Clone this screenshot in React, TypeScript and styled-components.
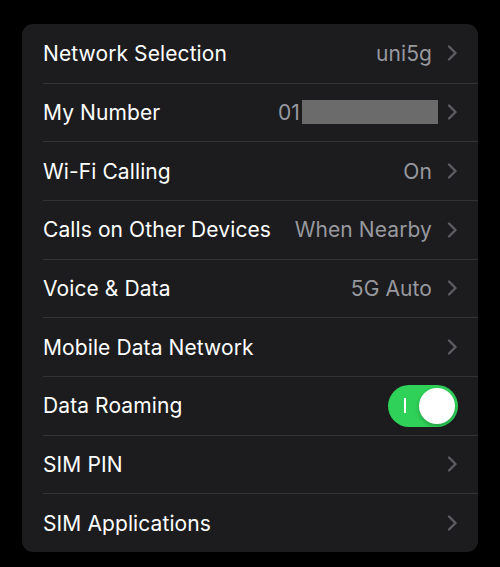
import React from "react";
import styled, { createGlobalStyle } from "styled-components";

const GlobalStyle = createGlobalStyle`
  html, body {
    margin: 0;
    padding: 0;
    background: #000;
  }
  body {
    font-family: Inter, "Liberation Sans", sans-serif;
    -webkit-font-smoothing: antialiased;
  }
`;

const Page = styled.div`
  width: 500px;
  height: 567px;
  padding: 24px 22px 15px;
  box-sizing: border-box;
  background: #000;
`;

const Panel = styled.div`
  display: grid;
  grid-template-rows: repeat(9, 1fr);
  height: 528px;
  border-radius: 11px;
  background: #1c1c1e;
  overflow: hidden;
`;

const Row = styled.div`
  padding-left: 21px;
  display: flex;
`;

const RowInner = styled.div<{ $first?: boolean }>`
  flex: 1;
  display: flex;
  align-items: center;
  padding-right: 21px;
  border-top: ${(p) => (p.$first ? "none" : "1px solid #333336")};
`;

const Label = styled.span`
  flex: 1;
  color: #fff;
  font-size: 21px;
  letter-spacing: 0.1px;
`;

const Trailing = styled.div<{ $gap: number }>`
  display: flex;
  align-items: center;
  gap: ${(p) => p.$gap}px;
`;

const Value = styled.span`
  color: #98989f;
  font-size: 21px;
  letter-spacing: 0.1px;
  display: flex;
  align-items: center;
`;

const Mask = styled.span`
  display: inline-block;
  width: 136px;
  height: 24px;
  margin-left: 2px;
  background: #6b6b6b;
`;

const Switch = styled.div<{ $on: boolean }>`
  position: relative;
  width: 70px;
  height: 42px;
  border-radius: 21px;
  background: ${(p) => (p.$on ? "#30d158" : "#39393d")};
  margin-right: -1px;
`;

const Knob = styled.div`
  position: absolute;
  top: 3px;
  right: 3px;
  width: 36px;
  height: 36px;
  border-radius: 50%;
  background: #fff;
  box-shadow: 0 2px 4px rgba(0, 0, 0, 0.25);
`;

const OnMark = styled.div`
  position: absolute;
  left: 16px;
  top: 13px;
  width: 2px;
  height: 15px;
  background: #fff;
`;

const Chevron = () => (
  <svg width="10" height="16" viewBox="0 0 10 16">
    <polyline
      points="2,1.5 8.5,8 2,14.5"
      fill="none"
      stroke="#5c5c61"
      strokeWidth="2.4"
      strokeLinecap="round"
      strokeLinejoin="round"
    />
  </svg>
);

type Item = {
  label: string;
  value?: string;
  masked?: boolean;
  toggle?: boolean;
};

const items: Item[] = [
  { label: "Network Selection", value: "uni5g" },
  { label: "My Number", value: "01", masked: true },
  { label: "Wi-Fi Calling", value: "On" },
  { label: "Calls on Other Devices", value: "When Nearby" },
  { label: "Voice & Data", value: "5G Auto" },
  { label: "Mobile Data Network" },
  { label: "Data Roaming", toggle: true },
  { label: "SIM PIN" },
  { label: "SIM Applications" },
];

export default function App() {
  return (
    <>
      <GlobalStyle />
      <Page>
        <Panel>
          {items.map((item, i) => (
            <Row key={item.label}>
              <RowInner $first={i === 0}>
                <Label>{item.label}</Label>
                {item.toggle ? (
                  <Switch $on>
                    <OnMark />
                    <Knob />
                  </Switch>
                ) : (
                  <Trailing $gap={item.masked ? 9 : 15}>
                    {item.value && (
                      <Value>
                        {item.value}
                        {item.masked && <Mask />}
                      </Value>
                    )}
                    <Chevron />
                  </Trailing>
                )}
              </RowInner>
            </Row>
          ))}
        </Panel>
      </Page>
    </>
  );
}
